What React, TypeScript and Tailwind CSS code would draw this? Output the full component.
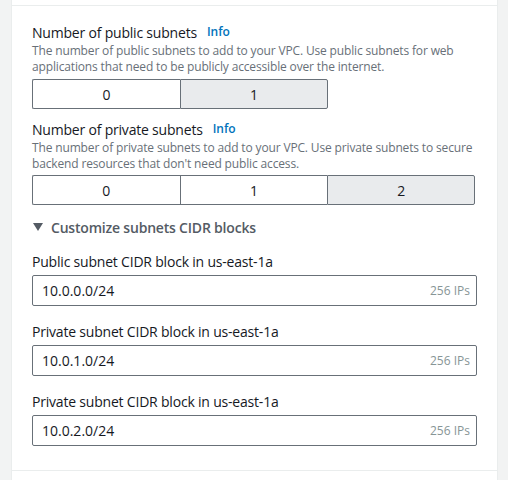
import { ReactNode } from 'react'

const font = { fontFamily: '"Open Sans", "Noto Sans", Arial, sans-serif' }

function Segmented({ options, selected, cols }: { options: string[]; selected: number; cols: number }) {
  return (
    <div className="grid" style={{ gridTemplateColumns: `repeat(${cols}, 1fr)` }}>
      {options.map((opt, i) => (
        <div
          key={opt}
          className={`flex h-[30px] items-center justify-center border-y border-l border-[#687078] text-[14px] text-[#16191f] ${
            i === 0 ? 'rounded-l-[2px]' : ''
          } ${i === options.length - 1 ? 'rounded-r-[2px] border-r' : ''} ${
            i === selected ? 'bg-[#e9ebed]' : 'bg-white'
          }`}
        >
          {opt}
        </div>
      ))}
    </div>
  )
}

function FieldLabel({ children, info }: { children: ReactNode; info?: boolean }) {
  return (
    <div className="flex h-[22px] items-center text-[14px] tracking-[-0.2px] text-[#16191f]">
      {children}
      {info && <span className="ml-[10px] text-[12px] font-semibold tracking-[0px] text-[#0073bb]">Info</span>}
    </div>
  )
}

function CidrInput({ label, value }: { label: string; value: string }) {
  return (
    <div>
      <FieldLabel>{label}</FieldLabel>
      <div className="mt-[3px] flex h-[31px] items-center justify-between rounded-[2px] border border-[#687078] pl-[9px] pr-[6px]">
        <span className="text-[14px] text-[#16191f]">{value}</span>
        <span className="text-[12px] text-[#879596]">256 IPs</span>
      </div>
    </div>
  )
}

export default function App() {
  return (
    <div className="flex h-[480px] bg-[#f2f3f3] pl-[11px] pr-[10px]" style={font}>
      <div className="flex flex-1 flex-col border-x border-[#eaeded] bg-white">
        <div className="box-content h-[5px] shrink-0 border-b border-[#eaeded]" />
        <div className="flex flex-col px-[20px] pt-[15px]">
          <FieldLabel info>Number of public subnets</FieldLabel>
          <p className="whitespace-nowrap text-[12px] leading-[16px] tracking-[-0.15px] text-[#687078]">
            The number of public subnets to add to your VPC. Use public subnets for web
            <br />
            applications that need to be publicly accessible over the internet.
          </p>
          <div className="mt-[4px] w-[296px]">
            <Segmented options={['0', '1']} selected={1} cols={2} />
          </div>

          <div className="mt-[9px]">
            <FieldLabel info>Number of private subnets</FieldLabel>
          </div>
          <p className="whitespace-nowrap text-[12px] leading-[16px] tracking-[-0.15px] text-[#687078]">
            The number of private subnets to add to your VPC. Use private subnets to secure
            <br />
            backend resources that don't need public access.
          </p>
          <div className="mt-[3px] pr-[2px]">
            <Segmented options={['0', '1', '2']} selected={2} cols={3} />
          </div>

          <div className="mt-[12px] flex h-[20px] items-center gap-[8px] text-[14px] font-semibold tracking-[-0.2px] text-[#545b64]">
            <svg width="10" height="8" viewBox="0 0 10 8" className="ml-[1px]">
              <path d="M0 0h10L5 8z" fill="#545b64" />
            </svg>
            Customize subnets CIDR blocks
          </div>

          <div className="mt-[13px] flex flex-col gap-[14px]">
            <CidrInput label="Public subnet CIDR block in us-east-1a" value="10.0.0.0/24" />
            <CidrInput label="Private subnet CIDR block in us-east-1a" value="10.0.1.0/24" />
            <CidrInput label="Private subnet CIDR block in us-east-1a" value="10.0.2.0/24" />
          </div>
        </div>
        <div className="mt-[24px] border-t border-[#eaeded]" />
      </div>
    </div>
  )
}
